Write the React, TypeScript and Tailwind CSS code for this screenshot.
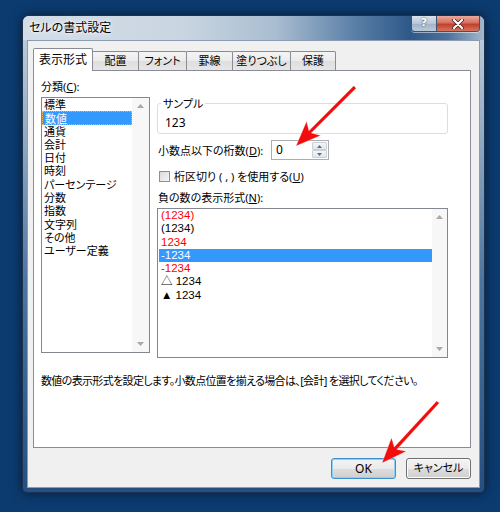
import React from "react";

const categories = [
  "標準",
  "数値",
  "通貨",
  "会計",
  "日付",
  "時刻",
  "パーセンテージ",
  "分数",
  "指数",
  "文字列",
  "その他",
  "ユーザー定義",
];

const negatives = [
  { text: "(1234)", red: true },
  { text: "(1234)", red: false },
  { text: "1234", red: true },
  { text: "-1234", red: false, selected: true },
  { text: "-1234", red: true },
  { text: "△ 1234", red: false },
  { text: "▲ 1234", red: false },
];

const tabs = [
  { label: "配置", w: "w-[47px]" },
  { label: "フォント", w: "w-[49px]" },
  { label: "罫線", w: "w-[47px]" },
  { label: "塗りつぶし", w: "w-[59px]" },
  { label: "保護", w: "w-[46px]" },
];

const Acc = ({ k }: { k: string }) => (
  <span className="underline underline-offset-[1px] decoration-[1px]">{k}</span>
);

const Tri = ({ down }: { down?: boolean }) => (
  <svg width="7" height="4" viewBox="0 0 7 4">
    <path d={down ? "M0 0H7L3.5 4Z" : "M0 4H7L3.5 0Z"} fill="#a8a8a8" />
  </svg>
);

const ScrollBar = ({ w }: { w: string }) => (
  <div className={`${w} h-full bg-[#f7f7f7] flex flex-col items-center justify-between py-[6px]`}>
    <Tri />
    <Tri down />
  </div>
);

function arrowPoints(x1: number, y1: number, x2: number, y2: number) {
  const head = 25;
  const half = 10;
  const shaft = 1.7;
  const dx = x2 - x1;
  const dy = y2 - y1;
  const len = Math.hypot(dx, dy);
  const ux = dx / len;
  const uy = dy / len;
  const px = -uy;
  const py = ux;
  const bx = x2 - ux * head;
  const by = y2 - uy * head;
  const nx = x2 - ux * (head - 5);
  const ny = y2 - uy * (head - 5);
  const p = [
    [x1 + px * shaft, y1 + py * shaft],
    [nx + px * shaft, ny + py * shaft],
    [bx + px * half, by + py * half],
    [x2, y2],
    [bx - px * half, by - py * half],
    [nx - px * shaft, ny - py * shaft],
    [x1 - px * shaft, y1 - py * shaft],
  ];
  return p.map((q) => q.map((n) => n.toFixed(1)).join(",")).join(" ");
}

const Arrows = () => (
  <svg className="absolute inset-0 pointer-events-none" width="500" height="512" viewBox="0 0 500 512">
    <polygon points={arrowPoints(355, 87, 296, 146)} fill="#f20d0d" stroke="#ffffff" strokeOpacity="0.5" strokeWidth="0.6" />
    <polygon points={arrowPoints(438, 402, 382, 463)} fill="#f20d0d" stroke="#ffffff" strokeOpacity="0.5" strokeWidth="0.6" />
  </svg>
);

const TitleBar = () => (
  <div className="h-[24px] flex justify-between items-start pl-[6px] pr-[4px] bg-[linear-gradient(90deg,#d3dde7_0%,#c9d5e1_35%,#a9bdd1_55%,#5a7fa7_72%,#2d5888_84%,#4d719a_92%,#a6b8cb_100%)] rounded-t-[6px]">
    <span className="pt-[4px] text-[12px] leading-[16px] text-black [text-shadow:0_0_6px_#ffffff,0_0_3px_#ffffff]">
      セルの書式設定
    </span>
    <div className="flex h-[16px] border border-t-0 border-[#3a536f] rounded-b-[4px] overflow-hidden shadow-[0_1px_0_rgba(255,255,255,0.5)]">
      <div className="w-[25px] flex items-center justify-center bg-[linear-gradient(180deg,#dbe3ec_0%,#b7c7d7_50%,#9fb3c8_51%,#b9cadb_100%)] border-r border-[#3a536f] text-white text-[11px] font-bold font-['DejaVu_Sans',sans-serif] [text-shadow:0_0_2px_#334]">
        ?
      </div>
      <div className="w-[42px] flex items-center justify-center bg-[linear-gradient(180deg,#e9a99c_0%,#d4715f_45%,#c1402d_55%,#d6735f_100%)]">
        <svg width="12" height="10" viewBox="0 0 12 10">
          <path d="M2 1L10 9M10 1L2 9" stroke="#3b1b16" strokeWidth="3.6" strokeLinecap="round" />
          <path d="M2 1L10 9M10 1L2 9" stroke="#ffffff" strokeWidth="2.2" strokeLinecap="round" />
        </svg>
      </div>
    </div>
  </div>
);

const Tabs = () => (
  <div className="relative z-10 flex items-end h-[22px]">
    <div className="w-[60px] h-[23px] mb-[-1px] bg-white border border-b-0 border-[#898c95] rounded-t-[2px] flex items-center justify-center text-[12px]">
      表示形式
    </div>
    {tabs.map((t) => (
      <div
        key={t.label}
        className={`${t.w} h-[19px] -ml-px first:ml-0 border border-b-0 border-[#898c95] rounded-t-[2px] bg-[linear-gradient(180deg,#f4f4f4_0%,#ebebeb_50%,#dedede_51%,#e6e6e6_100%)] flex items-center justify-center`}
      >
        {t.label}
      </div>
    ))}
  </div>
);

const CategoryList = () => (
  <div className="mt-[4px] h-[256px] w-[109px] border border-[#828790] bg-white flex">
    <div className="flex-1 flex flex-col">
      {categories.map((c) => (
        <div
          key={c}
          className={`h-[13.3px] leading-[13px] pl-[2px] whitespace-nowrap ${
            c === "数値" ? "bg-[#3399ff] text-white border border-dotted border-[#f0b060] pl-[1px]" : ""
          }`}
        >
          {c}
        </div>
      ))}
    </div>
    <ScrollBar w="w-[17px]" />
  </div>
);

const NegativeList = () => (
  <div className="mt-[4px] h-[150px] w-[291px] border border-[#828790] bg-white flex">
    <div className="flex-1 flex flex-col pl-[1px]">
      {negatives.map((n, i) => (
        <div
          key={i}
          className={`h-[13.3px] leading-[13.3px] pl-[2px] text-[11.5px] font-['Liberation_Sans','Noto_Sans_CJK_JP',sans-serif] ${
            n.selected ? "bg-[#3399ff] text-white" : n.red ? "text-[#ff0000]" : "text-black"
          }`}
        >
          {n.text}
        </div>
      ))}
    </div>
    <ScrollBar w="w-[15px]" />
  </div>
);

const SpinBox = () => (
  <div className="w-[58px] h-[20px] border border-[#abadb3] bg-white flex items-center justify-between pl-[4px] pr-[1px]">
    <span className="text-[12px] font-['Noto_Sans',sans-serif] leading-[16px]">0</span>
    <div className="flex flex-col gap-0">
      <div className="w-[15px] h-[8px] border border-[#c8d0d8] rounded-[1px] bg-[linear-gradient(180deg,#f6f6f6,#e2e6ea)] flex items-center justify-center">
        <svg width="5" height="3" viewBox="0 0 5 3">
          <path d="M0 3H5L2.5 0Z" fill="#56708f" />
        </svg>
      </div>
      <div className="w-[15px] h-[8px] border border-[#c8d0d8] rounded-[1px] bg-[linear-gradient(180deg,#f6f6f6,#e2e6ea)] flex items-center justify-center">
        <svg width="5" height="3" viewBox="0 0 5 3">
          <path d="M0 0H5L2.5 3Z" fill="#56708f" />
        </svg>
      </div>
    </div>
  </div>
);

const Pane = () => (
  <div className="w-[438px] h-[378px] bg-white border border-[#898c95] pl-[7px] pt-[9px]">
    <div className="flex gap-[7px]">
      <div className="flex flex-col">
        <div className="leading-[13px]">
          分類(<Acc k="C" />):
        </div>
        <CategoryList />
      </div>
      <div className="flex flex-col w-[291px] pt-[17px]">
        <fieldset className="h-[37px] border border-[#d5dfe5] rounded-[3px] px-[3px]">
          <legend className="px-[2px] leading-[13px]">サンプル</legend>
          <div className="mt-[6px] pl-[4px] leading-[13px] text-[12px] font-['Noto_Sans',sans-serif]">123</div>
        </fieldset>
        <div className="mt-[6px] flex items-center">
          <span className="w-[113px] ml-[1px] leading-[13px]">
            小数点以下の桁数(<Acc k="D" />):
          </span>
          <SpinBox />
        </div>
        <div className="mt-[10px] h-[13px] flex items-center gap-[4px] ml-[2px]">
          <div className="w-[11px] h-[11px] border border-[#8e8f8f] bg-[linear-gradient(135deg,#d6d6d6,#f9f9f9)] p-[1px]">
            <div className="w-full h-full border border-[#e8e8e8]" />
          </div>
          <span className="leading-[13px]">
            桁区切り ( , ) を使用する(<Acc k="U" />)
          </span>
        </div>
        <div className="mt-[8px] ml-[1px] leading-[13px]">
          負の数の表示形式(<Acc k="N" />):
        </div>
        <NegativeList />
      </div>
    </div>
    <div className="mt-[16px] leading-[13px] tracking-[-0.65px] whitespace-nowrap">
      数値の表示形式を設定します。小数点位置を揃える場合は、[会計] を選択してください。
    </div>
  </div>
);

const Buttons = () => (
  <div className="w-[438px] mt-[10px] flex justify-end gap-[10px]">
    <div className="w-[65px] h-[21px] rounded-[3px] border border-[#3c8fd0] shadow-[inset_0_0_0_1px_#8ed0f4] bg-[linear-gradient(180deg,#f3f3f3_0%,#ebebeb_50%,#dddddd_51%,#cfcfcf_100%)] flex items-center justify-center text-[12px]">
      OK
    </div>
    <div className="w-[65px] h-[21px] rounded-[3px] border border-[#707070] shadow-[inset_0_0_0_1px_#fbfbfb] bg-[linear-gradient(180deg,#f3f3f3_0%,#ebebeb_50%,#dddddd_51%,#cfcfcf_100%)] flex items-center justify-center">
      キャンセル
    </div>
  </div>
);

export default function App() {
  return (
    <div className="relative w-[500px] h-[512px] overflow-hidden bg-[#0c3b70] pl-[22px] pt-[15px] text-[11px] text-black font-['Noto_Sans','Noto_Sans_CJK_JP',sans-serif] [font-feature-settings:'palt']">
      <div className="w-[463px] h-[478px] rounded-t-[7px] rounded-b-[5px] border border-[#1c3350] bg-[linear-gradient(180deg,#c6d2de_0%,#9db3c9_20%,#4f76a0_55%,#244f80_100%)] shadow-[0_0_12px_rgba(0,0,0,0.55)] flex flex-col">
        <TitleBar />
        <div className="mx-[4px] flex-1 mb-[4px] bg-[#f0f0f0] border border-[#8c9cb0] pl-[5px] pt-[7px]">
          <Tabs />
          <Pane />
          <Buttons />
        </div>
      </div>
      <Arrows />
    </div>
  );
}
